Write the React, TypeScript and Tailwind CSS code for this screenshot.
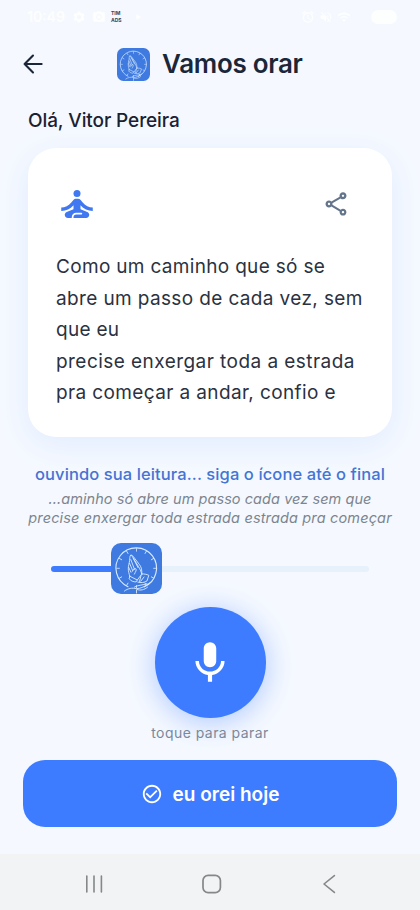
import { MdAlarm, MdCameraAlt, MdCheckCircleOutline, MdMic, MdOutlineShare, MdPlayArrow, MdSelfImprovement, MdSettings, MdVolumeOff, MdWifi } from 'react-icons/md';

const verse = [
  { text: 'Como um caminho que só se', spacing: 'tracking-[0.32px]' },
  { text: 'abre um passo de cada vez, sem', spacing: 'tracking-[0.37px]' },
  { text: 'que eu', spacing: 'tracking-[0.3px]' },
  { text: 'precise enxergar toda a estrada', spacing: 'tracking-[0.45px]' },
  { text: 'pra começar a andar, confio e', spacing: 'tracking-[0.38px]' },
];

const ticks = [0, 30, 60, 90, 120, 150, 180, 210, 240, 270, 300, 330];

const PrayerLogo = ({ className }: { className: string }) => (
  <svg className={className} viewBox="0 0 51 51" fill="none" stroke="#d9ecff" strokeLinecap="round" strokeLinejoin="round">
    <rect width="51" height="51" rx="10" fill="#3f7ae0" stroke="none" />
    <path d="M17 43.7A20.3 20.3 0 1 1 33 43.9" strokeWidth="1.1" />
    {ticks.map((deg) => (
      <path key={deg} d="M25.5 5.6v2.6" strokeWidth="0.8" transform={`rotate(${deg} 25.5 25.3)`} />
    ))}
    {/* Hands */}
    <g strokeWidth="0.9">
      <path d="M18.8 33.2c-.8-2.6-1.5-5-1.5-7.4 0-3.4 1-5.5 1.3-8.2.2-2.4.2-4.5.9-5.3.7-.6 1.4.2 1.9 1.4l6 9.7c1.4 2.4 2.6 4.8 3.4 7.6" />
      <path d="M19.6 12.3c1.1-.5 2 .3 2.8 1.4l6.2 8.1c1.9 2.7 2.4 5.2 2.2 9.2" />
      <path d="M19.8 16.6l3.7 9.7M18.6 20.3l3 7.2M17.6 24.2l2.3 5M22.3 15.5l4.8 9.2M21.3 28.4c1.2-2.2 2.5-3.4 3.6-2.6 1 1-.5 3.3-1.5 5.3" />
      <path d="M18.8 33.2l7.5 3.8 4.5-6M18.8 33.2l-.6 2.5c1.6 2.4 4.3 3.2 7 3.2l1.1-1.9M30.8 31c2.4-.2 5 .3 7 1.3l-1.8 5.6c-2.6 1.8-6.2 2.2-9.2 1.2M30 32.5l-1.5 6M33 34l-3.2 4.2" />
      <path d="M13.5 48c3.5-2.7 7.7-3.4 12-2.3 4.3-.1 8.8-2.4 13.1-5.7M23.5 44c4.2-2.2 8.2-1.7 12.5-3.3M25.5 47v3M26 46.5c3.5 1.3 7.3.4 10.5-2.3" />
    </g>
  </svg>
);

const StatusBar = () => (
  <div className="h-[34px] flex items-center justify-between pl-[27px] pr-[23px] text-[#fdfefe]">
    <div className="flex items-center">
      <span className="w-[45px] text-[14px] font-semibold leading-none">10:49</span>
      <MdSettings className="w-3.5 h-3.5 mr-1.5 shrink-0" />
      <MdCameraAlt className="w-3.5 h-3.5 mr-[5px] shrink-0" />
      <span className="w-[22px] text-[5px] leading-[7px] font-bold text-[#33465c]">
        TIM
        <br />
        ADS
      </span>
      <MdPlayArrow className="w-2.5 h-2.5" />
    </div>
    <div className="flex items-center gap-1">
      <MdAlarm className="w-3.5 h-3.5" />
      <MdVolumeOff className="w-3.5 h-3.5" />
      <MdWifi className="w-3.5 h-3.5 mr-4" />
      <div className="w-[26px] h-[14px] rounded-full bg-[#fdfefe]" />
    </div>
  </div>
);

const Header = () => (
  <header className="h-[60px] flex items-center pl-[19px]">
    <button aria-label="Voltar">
      <svg className="w-7 h-7" viewBox="0 0 24 24" fill="none" stroke="#1b2739" strokeWidth="1.8" strokeLinecap="round" strokeLinejoin="round">
        <path d="M19.4 12H4.8M12 19.2L4.8 12 12 4.8" />
      </svg>
    </button>
    <PrayerLogo className="w-[33px] h-[33px] ml-[70px] mr-3" />
    <h1 className="text-[26px] font-semibold leading-none tracking-[-0.3px] text-[#1b2739]">Vamos orar</h1>
  </header>
);

const PrayerCard = () => (
  <section className="mx-7 mt-[14px] h-[289px] rounded-[28px] bg-white px-7 pt-[35px] shadow-[0_8px_32px_rgba(62,124,255,0.1)]">
    <div className="h-[42px] flex items-center justify-between pr-3.5">
      <MdSelfImprovement className="w-[42px] h-[42px] text-[#3f78f0]" />
      <MdOutlineShare className="w-7 h-7 text-[#64748b]" />
    </div>
    <div className="mt-[26px] text-[19px] leading-[31.6px] text-[#2b323f]">
      {verse.map((line) => (
        <p key={line.text} className={`whitespace-nowrap ${line.spacing}`}>{line.text}</p>
      ))}
    </div>
  </section>
);

const Progress = () => (
  <div className="mx-[51px] mt-4 h-[51px] flex items-center">
    <div className="w-[60px] h-[6px] rounded-l-full bg-[#3e7cff]" />
    <PrayerLogo className="w-[51px] h-[51px] shrink-0" />
    <div className="flex-1 h-[6px] rounded-r-full bg-[#e6f1fc]" />
  </div>
);

const SystemNav = () => (
  <nav className="h-14 bg-[#f1f3f5] flex items-center pl-[84px] pt-[3px]">
    <svg className="w-5 h-5" viewBox="0 0 20 20" stroke="#858789" strokeWidth="1.6" strokeLinecap="round">
      <path d="M2.8 2v16M10 2v16M17.4 2v16" />
    </svg>
    <svg className="w-5 h-5 ml-[98px]" viewBox="0 0 20 20" fill="none" stroke="#858789" strokeWidth="1.7">
      <rect x="1" y="1.4" width="17.4" height="17.2" rx="5.2" />
    </svg>
    <svg className="w-5 h-5 ml-[98px]" viewBox="0 0 20 20" fill="none" stroke="#858789" strokeWidth="1.6" strokeLinecap="round" strokeLinejoin="round">
      <path d="M14.4 1.6L4 10l10.4 8.4" />
    </svg>
  </nav>
);

const App = () => {
  return (
    <div className="w-[420px] h-[910px] flex flex-col overflow-hidden bg-[#f5f9ff] font-['Inter',sans-serif]">
      <StatusBar />
      <Header />
      <p className="mt-[13px] ml-7 text-[19px] font-medium leading-[27px] tracking-[-0.1px] text-[#1b2130]">Olá, Vitor Pereira</p>
      <PrayerCard />

      <div className="mt-[25px] text-center whitespace-nowrap">
        <p className="text-[16.5px] font-medium leading-6 tracking-[0.1px] text-[#4474d4]">ouvindo sua leitura... siga o ícone até o final</p>
        <div className="mt-[3px] text-[14.5px] italic leading-[19px] text-[#7c858f]">
          <p className="tracking-[0.06px]">...aminho só abre um passo cada vez sem que</p>
          <p className="tracking-[0.15px]">precise enxergar toda estrada estrada pra começar</p>
        </div>
      </div>

      <Progress />

      <div className="mt-[13px] flex flex-col items-center">
        <button aria-label="Parar" className="w-[111px] h-[111px] rounded-full bg-[#3e7cff] flex items-center justify-center shadow-[0_4px_28px_rgba(62,124,255,0.4)]">
          <MdMic className="w-[50px] h-[50px] text-white" />
        </button>
        <p className="mt-[5px] text-[14px] leading-5 tracking-[0.45px] text-[#7b889b]">toque para parar</p>
      </div>

      <button className="mx-[23px] mt-[17px] h-[67px] rounded-[22px] bg-[#3e7cff] flex items-center justify-center gap-2.5 text-white">
        <MdCheckCircleOutline className="w-[22px] h-[22px]" />
        <span className="pt-[2px] text-[19px] font-semibold leading-6">eu orei hoje</span>
      </button>

      <div className="flex-1" />
      <SystemNav />
    </div>
  );
};

export default App;
